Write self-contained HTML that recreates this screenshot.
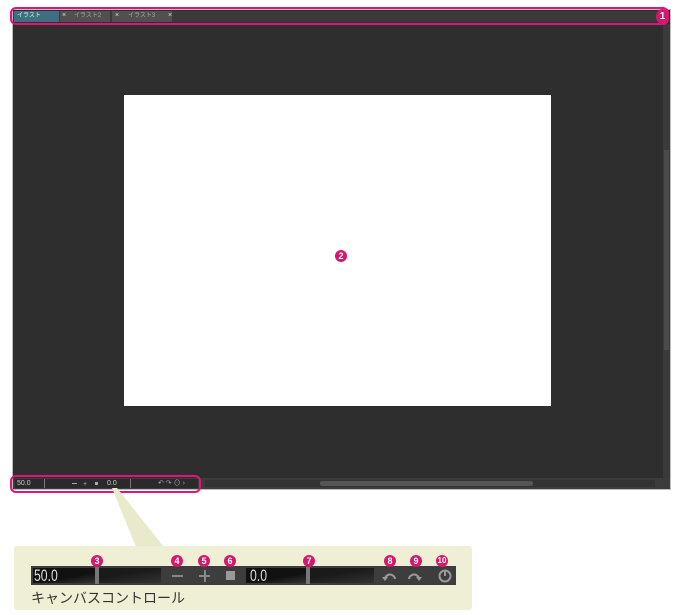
<!DOCTYPE html>
<html><head><meta charset="utf-8"><style>
*{margin:0;padding:0;box-sizing:border-box}
body{width:693px;height:615px;background:#fff;position:relative;overflow:hidden;font-family:"Liberation Sans","Noto Sans CJK JP",sans-serif}
.abs{position:absolute}
.badge{position:absolute;width:12px;height:12px;border-radius:50%;background:#d6176d;color:#fff;font-size:9px;font-weight:bold;text-align:center;line-height:12px}
</style></head><body>
<div class="abs" style="left:12px;top:9px;width:659px;height:481px;background:#bdbdbd"></div>
<div class="abs" style="left:13px;top:10px;width:657px;height:479px;background:#2e2e2e"></div>
<div class="abs" style="left:13px;top:11px;width:655px;height:11px;background:#3a3a3a"></div>
<div class="abs" style="left:14px;top:11px;width:45px;height:11px;background:#3e6e80;color:#cfd;font-size:6px;line-height:11px;padding-left:3px">イラスト</div>
<div class="abs" style="left:60px;top:11px;width:50px;height:11px;background:#505050;color:#aaa;font-size:6px;line-height:11px;padding-left:14px">イラスト2</div>
<div class="abs" style="left:112px;top:11px;width:60px;height:11px;background:#505050;color:#aaa;font-size:6px;line-height:11px;padding-left:16px">イラスト3</div>
<div class="abs" style="left:62px;top:12px;color:#ddd;font-size:7px">×</div>
<div class="abs" style="left:115px;top:12px;color:#ddd;font-size:7px">×</div>
<div class="abs" style="left:168px;top:12px;color:#ddd;font-size:7px">×</div>
<div class="abs" style="left:663px;top:24px;width:7px;height:454px;background:#3a3a3a"></div>
<div class="abs" style="left:664px;top:150px;width:5px;height:200px;background:#4a4a4a"></div>
<div class="abs" style="left:124px;top:95px;width:427px;height:311px;background:#fff"></div>
<div class="abs" style="left:13px;top:478px;width:657px;height:11px;background:#3c3c3c"></div>
<div class="abs" style="left:205px;top:480px;width:450px;height:7px;background:#333"></div>
<div class="abs" style="left:320px;top:481px;width:213px;height:5px;background:#555;border-radius:2px"></div>
<div class="abs" style="left:15px;top:479px;width:183px;height:9px;background:#2a2a2a;color:#ccc;font-size:7px;line-height:9px;padding-left:2px">50.0</div>
<div class="abs" style="left:44px;top:479px;width:1px;height:9px;background:#777"></div>
<div class="abs" style="left:72px;top:483px;width:5px;height:1px;background:#aaa"></div>
<div class="abs" style="left:83px;top:481px;color:#aaa;font-size:7px;line-height:7px">+</div>
<div class="abs" style="left:95px;top:482px;width:3px;height:3px;background:#aaa"></div>
<div class="abs" style="left:107px;top:479px;color:#ccc;font-size:7px;line-height:9px">0.0</div>
<div class="abs" style="left:130px;top:479px;width:1px;height:9px;background:#777"></div>
<div class="abs" style="left:158px;top:479px;color:#aaa;font-size:7px;line-height:9px">↶ ↷ ⊙ ›</div>
<div class="abs" style="left:10px;top:7px;width:659px;height:18px;border:2px solid #e0157a;border-radius:6px"></div>
<div class="abs" style="left:10px;top:475px;width:191px;height:18px;border:2px solid #e0157a;border-radius:6px"></div>
<div class="badge" style="left:656px;top:9px;width:13px;height:15px;line-height:15px;font-size:10px">1</div>
<div class="badge" style="left:335px;top:250px">2</div>
<svg class="abs" style="left:0;top:0" width="693" height="615"><polygon points="112,488 117,488 164,547 136,547" fill="#e9e9cc"/></svg>
<div class="abs" style="left:14px;top:546px;width:458px;height:64px;background:#efefd6;border-radius:3px"></div>
<div class="abs" style="left:31px;top:566px;width:425px;height:19px;background:#3d3d3d"></div>
<div class="abs" style="left:33px;top:568px;width:62px;height:15px;background:linear-gradient(170deg,#111 60%,#333)"></div>
<div class="abs" style="left:34px;top:567px;color:#ddd;font-size:17px;line-height:17px;transform:scaleX(0.72);transform-origin:left">50.0</div>
<div class="abs" style="left:95px;top:567px;width:4px;height:17px;background:#777"></div>
<div class="abs" style="left:99px;top:568px;width:62px;height:15px;background:linear-gradient(170deg,#1a1a1a 40%,#333)"></div>
<div class="abs" style="left:172px;top:575px;width:11px;height:2px;background:#888"></div>
<div class="abs" style="left:199px;top:575px;width:11px;height:2px;background:#888"></div>
<div class="abs" style="left:203.5px;top:570px;width:2px;height:12px;background:#888"></div>
<div class="abs" style="left:226px;top:571px;width:9px;height:9px;background:#999"></div>
<div class="abs" style="left:246px;top:568px;width:60px;height:15px;background:linear-gradient(170deg,#111 60%,#333)"></div>
<div class="abs" style="left:250px;top:567px;color:#ddd;font-size:17px;line-height:17px;transform:scaleX(0.72);transform-origin:left">0.0</div>
<div class="abs" style="left:306px;top:567px;width:4px;height:17px;background:#777"></div>
<div class="abs" style="left:310px;top:568px;width:64px;height:15px;background:linear-gradient(170deg,#1a1a1a 40%,#333)"></div>
<svg class="abs" style="left:380px;top:566px" width="80" height="19" fill="none" stroke="#999" stroke-width="2">
<path d="M5,14 A5,5 0 1 1 15,13"/><path d="M2,11 L5,15 L8,11" fill="#999" stroke="none"/>
<path d="M29,13 A5,5 0 1 1 39,14"/><path d="M36,11 L39,15 L42,11" fill="#999" stroke="none"/>
<circle cx="65" cy="10" r="5.5"/><path d="M65,4 V10"/>
</svg>
<div class="badge" style="left:91px;top:555px">3</div>
<div class="badge" style="left:171px;top:555px">4</div>
<div class="badge" style="left:198px;top:555px">5</div>
<div class="badge" style="left:224px;top:555px">6</div>
<div class="badge" style="left:303px;top:555px">7</div>
<div class="badge" style="left:384px;top:555px">8</div>
<div class="badge" style="left:410px;top:555px">9</div>
<div class="badge" style="left:436px;top:555px;font-size:8px">10</div>
<div class="abs" style="left:31px;top:588px;font-size:14px;color:#333">キャンバスコントロール</div>
</body></html>
